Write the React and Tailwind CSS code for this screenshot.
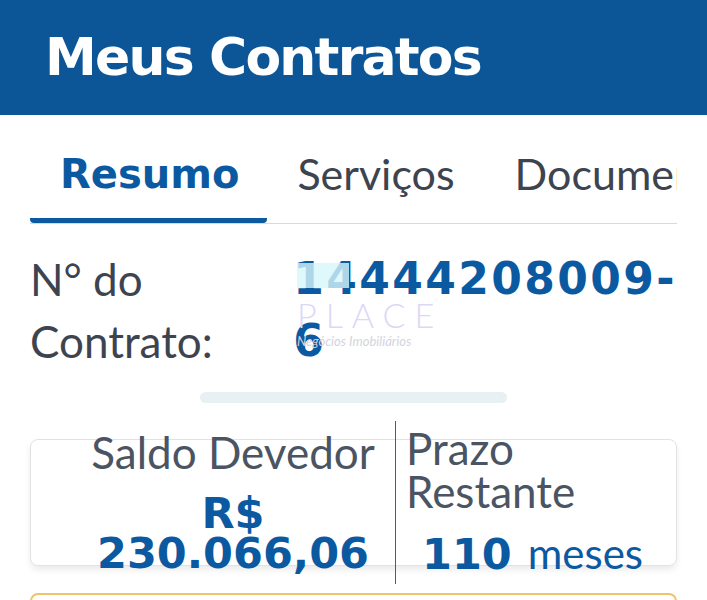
import React from 'react'

const FONT = { fontFamily: 'Lato, "Open Sans", sans-serif' }
const BOLD = { fontFamily: '"DejaVu Sans", Verdana, sans-serif' }

function Watermark() {
  return (
    <div className="absolute left-[297px] top-[263px] w-[124px] pointer-events-none">
      <div className="w-[52px] h-[25px] bg-[#d6f6fb] opacity-80" />
      <div className="mt-[10px] text-[34px] leading-none font-light tracking-[9px] text-[#dcd7f7]">PLACE</div>
      <div className="mt-[3px] text-[13px] leading-none italic text-[#d4d4dc]">Negócios Imobiliários</div>
    </div>
  )
}

function Tabs() {
  const tabs = ['Resumo', 'Serviços', 'Documentos']
  return (
    <div className="mx-[30px] mt-[35px] overflow-hidden border-b border-[#d9d9d9]">
      <div className="flex whitespace-nowrap">
        {tabs.map((t, i) => (
          <div
            key={t}
            style={i === 0 ? BOLD : undefined}
            className={
              i === 0
                ? 'pl-[30px] pr-[28px] pb-[20px] text-[40px] leading-[48px] font-bold text-[#0b5aa1] border-b-[5px] border-[#0b5aa1] rounded-b-sm'
                : 'px-[30px] pb-[25px] text-[43px] leading-[48px] text-[#3d4450]'
            }
          >
            {t}
          </div>
        ))}
      </div>
    </div>
  )
}

export default function App() {
  return (
    <div className="relative w-[707px] h-[600px] overflow-hidden bg-white" style={FONT}>
      <div className="h-[115px] bg-[#0c5596] pl-[45px] pt-[25px]">
        <h1 style={BOLD} className="text-[52px] leading-[64px] font-bold tracking-[-1.8px] text-white">Meus Contratos</h1>
      </div>

      <Tabs />

      <div className="mx-[30px] mt-[24px] flex leading-[62px]">
        <div className="w-[267px] text-[44px] text-[#3d4450]">
          N° do<br />Contrato:
        </div>
        <div style={BOLD} className="flex-1 text-[44px] font-bold tracking-[2.4px] text-[#0b5aa1]">
          14444208009-<br />6
        </div>
      </div>

      <div className="mx-auto mt-[20px] w-[307px] h-[11px] rounded-full bg-[#e7f0f3]" />

      <div className="mx-[30px] mt-[36px] h-[127px] rounded-lg border border-[#e2e2e2] shadow-[0_4px_6px_rgba(0,0,0,0.08)] flex">
        <div className="w-[364px] pl-[40px] -mt-[12px] text-center">
          <div className="text-[44px] leading-[48px] text-[#4a5463]">Saldo Devedor</div>
          <div style={BOLD} className="mt-[17px] text-[43px] leading-[40px] font-bold text-[#0b5aa1]">
            R$<br />230.066,06
          </div>
        </div>
        <div className="w-px h-[163px] -mt-[19px] bg-[#5a5a5a]" />
        <div className="flex-1 pl-[10px] -mt-[13px]">
          <div className="text-[44px] leading-[43px] text-[#4a5463]">Prazo<br />Restante</div>
          <div className="mt-[16px] pl-[16px] text-[#0b5aa1] whitespace-nowrap">
            <span style={BOLD} className="text-[43px] leading-[48px] font-bold">110</span>
            <span className="ml-[16px] text-[42px] leading-[48px]">meses</span>
          </div>
        </div>
      </div>

      <div className="mx-[30px] mt-[27px] h-[60px] rounded-lg border-2 border-[#f1c36a]" />

      <Watermark />
    </div>
  )
}
